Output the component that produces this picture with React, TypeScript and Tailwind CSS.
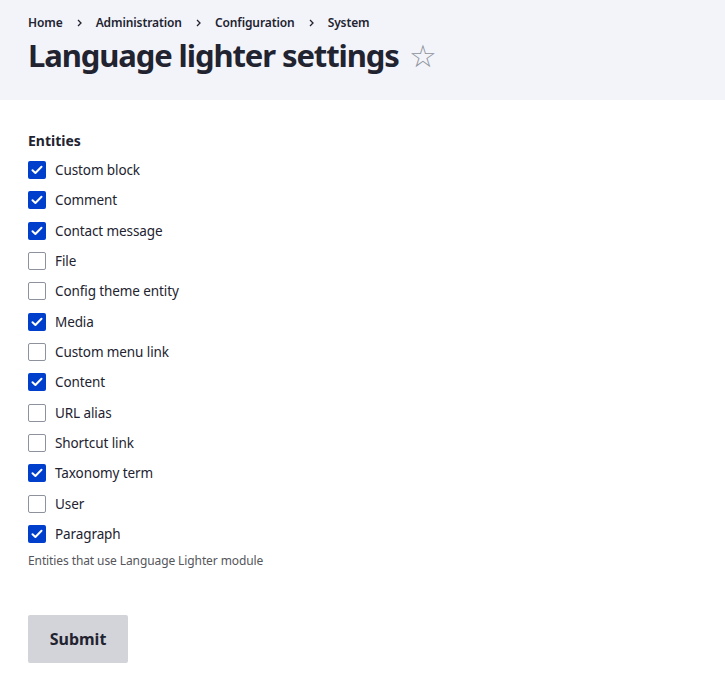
import React from 'react';

const entities = [
  { label: 'Custom block', checked: true },
  { label: 'Comment', checked: true },
  { label: 'Contact message', checked: true },
  { label: 'File', checked: false },
  { label: 'Config theme entity', checked: false },
  { label: 'Media', checked: true },
  { label: 'Custom menu link', checked: false },
  { label: 'Content', checked: true },
  { label: 'URL alias', checked: false },
  { label: 'Shortcut link', checked: false },
  { label: 'Taxonomy term', checked: true },
  { label: 'User', checked: false },
  { label: 'Paragraph', checked: true },
];

function Checkbox({ checked }: { checked: boolean }) {
  if (checked) {
    return (
      <span className="flex h-[18px] w-[18px] shrink-0 items-center justify-center rounded-[2px] bg-[#003ecc]">
        <svg width="12" height="10" viewBox="0 0 12 10" fill="none">
          <path d="M1.5 5.2 4.4 8 10.5 1.8" stroke="white" strokeWidth="2" strokeLinecap="round" strokeLinejoin="round" />
        </svg>
      </span>
    );
  }
  return <span className="h-[18px] w-[18px] shrink-0 rounded-[2px] border border-[#8e929c] bg-white" />;
}

export default function App() {
  const crumbs = ['Home', 'Administration', 'Configuration', 'System'];
  return (
    <div className="min-h-screen bg-white text-[#222330]" style={{ fontFamily: '"Noto Sans", sans-serif' }}>
      <div className="h-[100px] bg-[#f3f4f9] px-7 pt-[14px]">
        <nav className="flex items-center text-[12px] font-semibold leading-[18px] tracking-[-0.1px] text-[#222330]">
          {crumbs.map((c, i) => (
            <React.Fragment key={c}>
              {i > 0 && (
                <svg className="mx-[14px]" width="5" height="8" viewBox="0 0 5 8" fill="none">
                  <path d="M1 1l3 3-3 3" stroke="#222330" strokeWidth="1.3" />
                </svg>
              )}
              <span>{c}</span>
            </React.Fragment>
          ))}
        </nav>
        <h1 className="mt-[1px] flex items-center text-[31px] font-bold leading-[44px] tracking-[-1.1px]">
          Language lighter settings
          <span className="ml-[10px] text-[31px] font-normal leading-none tracking-normal text-[#8e929c]">☆</span>
        </h1>
      </div>

      <div className="px-7 pt-[31px]">
        <div className="text-[14px] font-bold leading-5">Entities</div>
        <div className="mt-[10px] flex flex-col">
          {entities.map((e) => (
            <label key={e.label} className="flex h-[30.33px] items-start gap-[9px]">
              <Checkbox checked={e.checked} />
              <span className="text-[13.5px] leading-[18px] tracking-[-0.1px]">{e.label}</span>
            </label>
          ))}
        </div>
        <p className="-mt-[3px] text-[12px] leading-[18px] tracking-[-0.1px] text-[#55565b]">Entities that use Language Lighter module</p>
        <button className="mt-[45px] h-12 w-[100px] rounded-[2px] bg-[#d3d4d9] text-[16px] font-bold text-[#222330]">
          Submit
        </button>
      </div>
    </div>
  );
}
